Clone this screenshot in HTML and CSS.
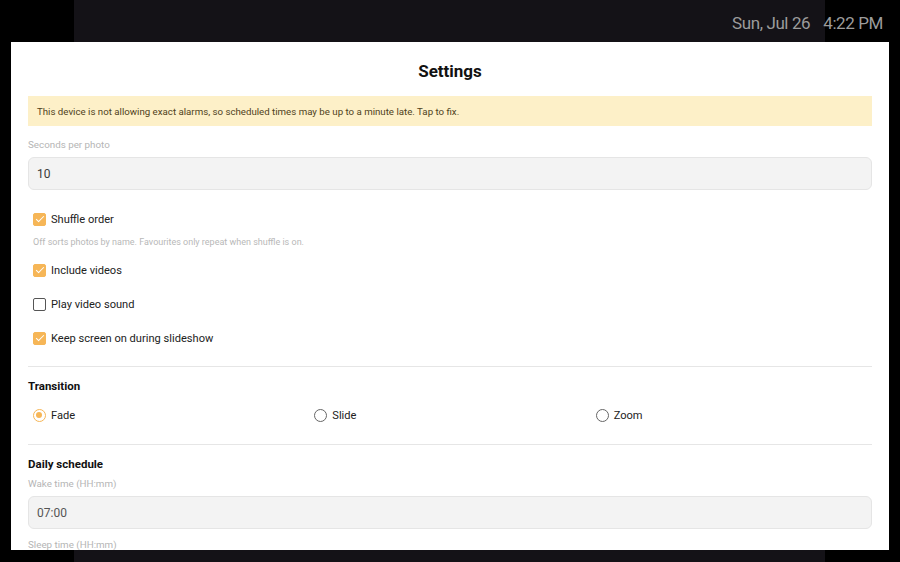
FILE: index.html
```html
<!DOCTYPE html>
<html lang="en">
<head>
  <meta charset="UTF-8">
  <title>Settings</title>
  <meta name="viewport" content="width=device-width, initial-scale=1.0">
  <link rel="stylesheet" href="styles.css">
</head>
<body>

<div class="screen">
  <div class="photo"></div>

  <div class="clock">
    <span>Sun, Jul 26</span>
    <span>4:22 PM</span>
  </div>

  <div class="modal">
    <h2 class="modal-title">Settings</h2>

    <div class="banner">This device is not allowing exact alarms, so scheduled times may be up to a minute late. Tap to fix.</div>

    <label class="field-label first">Seconds per photo</label>
    <div class="field">10</div>

    <div class="check-row first">
      <span class="box checked"></span>
      <span>Shuffle order</span>
    </div>
    <p class="hint">Off sorts photos by name. Favourites only repeat when shuffle is on.</p>
    <div class="check-row after-hint">
      <span class="box checked"></span>
      <span>Include videos</span>
    </div>
    <div class="check-row">
      <span class="box"></span>
      <span>Play video sound</span>
    </div>
    <div class="check-row">
      <span class="box checked"></span>
      <span>Keep screen on during slideshow</span>
    </div>

    <hr class="divider">

    <h3 class="section">Transition</h3>
    <div class="radios">
      <div class="radio-row"><span class="dot on"></span><span>Fade</span></div>
      <div class="radio-row"><span class="dot"></span><span>Slide</span></div>
      <div class="radio-row"><span class="dot"></span><span>Zoom</span></div>
    </div>

    <hr class="divider second">

    <h3 class="section">Daily schedule</h3>
    <label class="field-label small-gap">Wake time (HH:mm)</label>
    <div class="field muted">07:00</div>
    <label class="field-label after-field">Sleep time (HH:mm)</label>
    <div class="field muted">22:00</div>
  </div>
</div>

</body>
</html>
```

FILE: styles.css
```css
* {
  box-sizing: border-box;
}

body {
  margin: 0;
  background: #000;
  font-family: Roboto, "Noto Sans", Arial, sans-serif;
  overflow: hidden;
}

.screen {
  position: relative;
  width: 900px;
  height: 562px;
}

.photo {
  width: 751px;
  height: 562px;
  margin-left: 74px;
  background: #141217;
}

.clock {
  position: absolute;
  top: 12px;
  right: 17px;
  display: flex;
  gap: 13px;
  color: #9c9c9c;
  font-size: 17px;
  letter-spacing: -0.4px;
  line-height: 22px;
}

.modal {
  position: absolute;
  top: 42px;
  left: 11px;
  width: 878px;
  height: 508px;
  background: #fff;
  padding: 0 17px;
  overflow: hidden;
}

.modal-title {
  margin: 19px 0 0;
  text-align: center;
  font-size: 17px;
  line-height: 20px;
  font-weight: 700;
  color: #111;
}

.banner {
  margin-top: 15px;
  background: #fdf0c8;
  color: #4f4220;
  font-size: 9.7px;
  line-height: 14px;
  padding: 9px 9px 7px;
}

.field-label {
  display: block;
  margin-top: 13px;
  font-size: 9.8px;
  line-height: 12px;
  color: #b5b5b5;
}

.field-label.small-gap {
  margin-top: 7px;
}

.field-label.after-field {
  margin-top: 10px;
}

.field {
  margin-top: 6px;
  height: 33px;
  background: #f3f3f3;
  border: 1px solid #e5e5e5;
  border-radius: 6px;
  padding: 0 8px;
  font-size: 12px;
  line-height: 32px;
  color: #3a3a3a;
}

.field.muted {
  color: #555;
}

.check-row,
.radio-row {
  display: flex;
  align-items: center;
  gap: 5px;
  height: 20px;
  margin-top: 14px;
  font-size: 11.1px;
  color: #222;
}

.check-row.first {
  margin-top: 19px;
}

.check-row.after-hint {
  margin-top: 12px;
}

.box {
  width: 13px;
  height: 13px;
  margin-left: 5px;
  border: 1.5px solid #555;
  border-radius: 2px;
  position: relative;
}

.box.checked {
  background: #f6b657;
  border-color: #f6b657;
}

.box.checked::after {
  content: "";
  position: absolute;
  left: 3.5px;
  top: 0.5px;
  width: 3px;
  height: 7px;
  border: solid #fff;
  border-width: 0 1.5px 1.5px 0;
  transform: rotate(45deg);
}

.hint {
  margin: 7px 0 0 5px;
  font-size: 9px;
  line-height: 12px;
  color: #b8b8b8;
}

.divider {
  margin: 18px 0 0;
  border: none;
  border-top: 1px solid #e6e6e6;
}

.divider.second {
  margin-top: 19px;
}

.section {
  margin: 12px 0 0;
  font-size: 11.5px;
  line-height: 14px;
  font-weight: 700;
  color: #111;
}

.radios {
  display: grid;
  grid-template-columns: repeat(3, 1fr);
  margin-top: 12px;
}

.radio-row {
  margin-top: 0;
}

.dot {
  width: 13px;
  height: 13px;
  margin-left: 5px;
  border: 1px solid #666;
  border-radius: 50%;
  position: relative;
}

.dot.on {
  border: 1.5px solid #f6b657;
}

.dot.on::after {
  content: "";
  position: absolute;
  left: 2px;
  top: 2px;
  width: 6px;
  height: 6px;
  border-radius: 50%;
  background: #f6b657;
}
```
